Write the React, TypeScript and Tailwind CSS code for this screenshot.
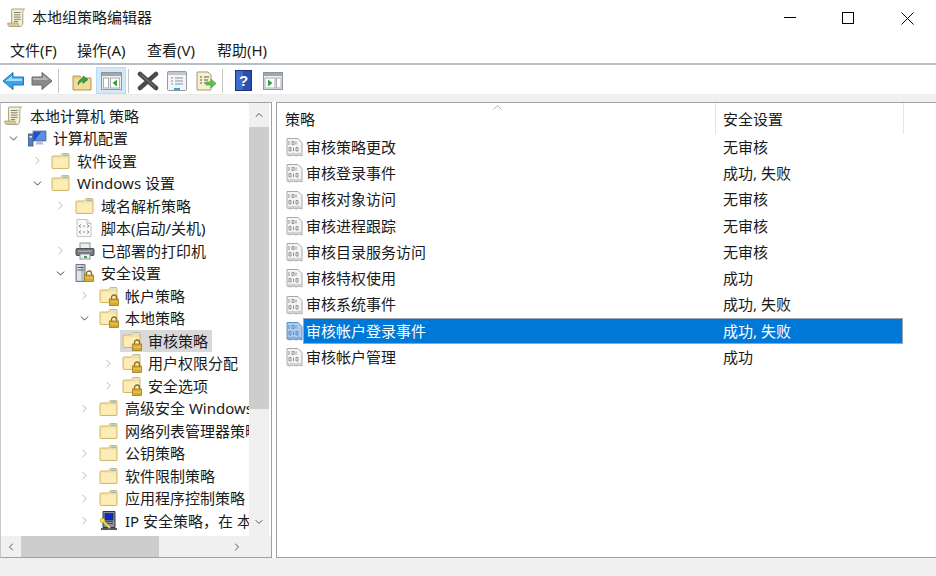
import React from "react";
import { ChevronRight, ChevronDown, ChevronUp, ChevronLeft } from "lucide-react";

const font = { fontFamily: '"Noto Sans", "Noto Sans CJK SC", sans-serif' };

function ScrollIcon() {
    return (
        <svg width="19" height="20" viewBox="0 0 19 20" className="shrink-0">
            <path d="M5 1h12.500c-1.200.8-1.700 1.800-1.700 3.200V15c0 2-1 3.500-2.600 3.500H3c1.200-.5 1.600-1.300 1.600-2.500V3.500C4.600 2.200 4.500 1.500 5 1z" fill="#f3edd2" stroke="#a8a184" />
            <path d="M.7 15h10.300c0 1.800.7 3 1.800 3.500H2.500C1.300 18.500.7 17 .7 15z" fill="#dcc98c" stroke="#a8a184" strokeWidth="0.800" />
            <path d="M7 4.500h6.500M7 6.800h6.500M7 9.100h6.500M7 11.400h6.500M7 13.500h4" stroke="#86836f" strokeWidth="1" />
        </svg>
    );
}

function FolderIcon() {
    return (
        <svg width="19" height="18" viewBox="0 0 19 18" className="shrink-0">
            <path d="M1 4.500V15.500c0 .7.400 1 1 1h15c.7 0 1-.4 1-1V2.500c0-.7-.4-1-1-1h-5.500c-.6 0-.8.300-1.200 1l-.6 1c-.2.300-.4.500-.8.500H2c-.7 0-1 .3-1 .500z" fill="#f8e3a2" stroke="#d2b76f" />
            <path d="M2 6h15v9.500H2z" fill="#fcecb6" />
            <path d="M12 2.500h5v1.800h-5.800z" fill="#7fc0e6" />
        </svg>
    );
}

function LockBadge({ x, y }: { x: number; y: number }) {
    return (
        <g transform={`translate(${x} ${y})`}>
            <path d="M2.500 4.500V3a2.500 2.500 0 0 1 5 0v1.500" fill="none" stroke="#8a6d1e" strokeWidth="1.300" />
            <rect x="0.500" y="4.500" width="9" height="6.500" fill="#d6a92c" stroke="#8f6f17" strokeWidth="0.700" />
            <path d="M1 7.500h8" stroke="#efcf6c" strokeWidth="1" />
        </g>
    );
}

function LockFolderIcon() {
    return (
        <svg width="21" height="20" viewBox="0 0 21 20" className="shrink-0">
            <path d="M1 4.500V15.500c0 .7.400 1 1 1h15c.7 0 1-.4 1-1V2.500c0-.7-.4-1-1-1h-5.500c-.6 0-.8.300-1.200 1l-.6 1c-.2.300-.4.500-.8.500H2c-.7 0-1 .3-1 .500z" fill="#f8e3a2" stroke="#d2b76f" />
            <path d="M2 6h15v9.500H2z" fill="#fcecb6" />
            <path d="M12 2.500h5v1.800h-5.800z" fill="#cfe3ee" />
            <LockBadge x={10} y={8.500} />
        </svg>
    );
}

function ComputerIcon() {
    return (
        <svg width="20" height="20" viewBox="0 0 20 20" className="shrink-0">
            <rect x="6" y="3" width="13" height="10" fill="#1d4fc4" stroke="#8c97a8" />
            <path d="M8 12l6-8h4v8z" fill="#5c8ee6" />
            <path d="M10 13.500h5l1.500 3h-8z" fill="#b4bcc8" />
            <rect x="1.500" y="6" width="4.500" height="12" fill="#4a86c8" stroke="#43556e" strokeWidth="0.800" />
            <rect x="2.500" y="8" width="2.500" height="1.500" fill="#e3edf7" />
        </svg>
    );
}

function ScriptIcon() {
    return (
        <svg width="18" height="20" viewBox="0 0 18 20" className="shrink-0">
            <path d="M2 1.500h10l4 4v13H2z" fill="#f9f9f9" stroke="#c4c4c4" />
            <path d="M12 1.500v4h4" fill="#e8e8e8" stroke="#c4c4c4" />
            <path d="M6 6.500l-2 1.500 2 1.500M12 6.500l2 1.500-2 1.500M6 12.500l-2 1.500 2 1.500M12 12.500l2 1.500-2 1.500M8 8h2M8 14h2" fill="none" stroke="#7b7f86" strokeWidth="0.900" />
        </svg>
    );
}

function PrinterIcon() {
    return (
        <svg width="20" height="20" viewBox="0 0 20 20" className="shrink-0">
            <rect x="5" y="2" width="10" height="6" fill="#eceef0" stroke="#8d9096" />
            <rect x="1" y="7.500" width="18" height="7" rx="1" fill="#70757d" stroke="#4d5157" />
            <rect x="3" y="9.500" width="14" height="1.500" fill="#a9adb3" />
            <rect x="5" y="13" width="10" height="5" fill="#f2f2f2" stroke="#8d9096" />
            <rect x="9" y="15" width="3" height="2" fill="#2fa866" />
        </svg>
    );
}

function SecurityIcon() {
    return (
        <svg width="20" height="20" viewBox="0 0 20 20" className="shrink-0">
            <path d="M1 1.500h9v17H1z" fill="#b9c1cc" stroke="#6d7785" />
            <path d="M2 2.500h4v15H2z" fill="#dfe4ea" />
            <path d="M2.500 4.500h6M2.500 7h6" stroke="#4f5866" />
            <LockBadge x={9} y={7.500} />
        </svg>
    );
}

function IpSecIcon() {
    return (
        <svg width="20" height="21" viewBox="0 0 20 21" className="shrink-0">
            <path d="M4 1.500h12v16H4z" fill="#8d9199" stroke="#33363b" />
            <rect x="6" y="3.500" width="8" height="6.500" fill="#1628c8" stroke="#24272c" strokeWidth="0.700" />
            <path d="M6 11.500h8M6 13.500h8" stroke="#4d5157" />
            <path d="M2 18h16v2H2z" fill="#55585e" />
            <circle cx="3.500" cy="10.500" r="2.300" fill="#f4e34a" stroke="#a39a22" strokeWidth="0.600" />
            <path d="M5 12l6 6" stroke="#eedb3c" strokeWidth="2" />
        </svg>
    );
}

function PolicyIcon({ selected }: { selected?: boolean }) {
    const line = selected ? "#5b8fca" : "#8f9296";
    return (
        <svg width="17" height="20" viewBox="0 0 17 20" className="shrink-0">
            <path d="M1 1.500h11l4 4v13.500l-3-1-3 1-3-1-3 1-3-1z" fill={selected ? "#a9cbee" : "#f4f4f4"} stroke={selected ? "#5b8fca" : "#a8a8a8"} />
            <path d="M1.500 15.500l2.500 1 3-1 3 1 3-1 2.500 1v2l-3-1-3 1-3-1-3 1-2.500-1z" fill={selected ? "#7fa9d8" : "#cfcfcf"} />
            <path d="M3 4v4M6 4.500h2v3H6zM3 10.500h2v3.500H3zM7.500 10.500v3.500M10 10.500h2v3.500h-2zM10 7.500v-3" fill="none" stroke={line} strokeWidth="1" />
        </svg>
    );
}

type TreeRow = {
    label: string;
    depth: number;
    icon: React.ReactNode;
    toggle?: "open" | "closed";
    selected?: boolean;
};

const indents = ["pl-[3px]", "pl-[26px]", "pl-[50px]", "pl-[74px]", "pl-[98px]", "pl-[121px]"];
const arrowIndents = ["", "left-[6px]", "left-[30px]", "left-[53px]", "left-[77px]", "left-[101px]"];

const treeRows: TreeRow[] = [
    { label: "本地计算机 策略", depth: 0, icon: <ScrollIcon /> },
    { label: "计算机配置", depth: 1, icon: <ComputerIcon />, toggle: "open" },
    { label: "软件设置", depth: 2, icon: <FolderIcon />, toggle: "closed" },
    { label: "Windows 设置", depth: 2, icon: <FolderIcon />, toggle: "open" },
    { label: "域名解析策略", depth: 3, icon: <FolderIcon />, toggle: "closed" },
    { label: "脚本(启动/关机)", depth: 3, icon: <ScriptIcon /> },
    { label: "已部署的打印机", depth: 3, icon: <PrinterIcon />, toggle: "closed" },
    { label: "安全设置", depth: 3, icon: <SecurityIcon />, toggle: "open" },
    { label: "帐户策略", depth: 4, icon: <LockFolderIcon />, toggle: "closed" },
    { label: "本地策略", depth: 4, icon: <LockFolderIcon />, toggle: "open" },
    { label: "审核策略", depth: 5, icon: <LockFolderIcon />, selected: true },
    { label: "用户权限分配", depth: 5, icon: <LockFolderIcon />, toggle: "closed" },
    { label: "安全选项", depth: 5, icon: <LockFolderIcon />, toggle: "closed" },
    { label: "高级安全 Windows Defender 防火墙", depth: 4, icon: <FolderIcon />, toggle: "closed" },
    { label: "网络列表管理器策略", depth: 4, icon: <FolderIcon /> },
    { label: "公钥策略", depth: 4, icon: <FolderIcon />, toggle: "closed" },
    { label: "软件限制策略", depth: 4, icon: <FolderIcon />, toggle: "closed" },
    { label: "应用程序控制策略", depth: 4, icon: <FolderIcon />, toggle: "closed" },
    { label: "IP 安全策略，在 本地计算机", depth: 4, icon: <IpSecIcon />, toggle: "closed" },
];

const policies = [
    { name: "审核策略更改", value: "无审核" },
    { name: "审核登录事件", value: "成功, 失败" },
    { name: "审核对象访问", value: "无审核" },
    { name: "审核进程跟踪", value: "无审核" },
    { name: "审核目录服务访问", value: "无审核" },
    { name: "审核特权使用", value: "成功" },
    { name: "审核系统事件", value: "成功, 失败" },
    { name: "审核帐户登录事件", value: "成功, 失败", selected: true },
    { name: "审核帐户管理", value: "成功" },
];

function Separator() {
    return <div className="w-px h-[24px] bg-[#c4c4c4] shrink-0" />;
}

function Toolbar() {
    return (
        <div className="flex items-center h-[30px] pt-[2px] pl-[2px] shrink-0 border-b border-[#ececec]">
            <svg width="23" height="20" viewBox="0 0 23 20" className="shrink-0">
                <path d="M1 10L11 1.500V6h10.500v8H11v4.500z" fill="#3ba3ea" stroke="#1b75c0" />
                <path d="M4 9.500L10 5v2.500h10V10H4z" fill="#a6dcfb" />
            </svg>
            <svg width="22" height="20" viewBox="0 0 22 20" className="ml-[6px] shrink-0">
                <path d="M21 10L11 1.500V6H1v8h10v4.500z" fill="#8a8a8a" stroke="#6b6b6b" />
                <path d="M2 7h10V4l6 5H2z" fill="#b5b5b5" />
            </svg>
            <div className="ml-[5px]"><Separator /></div>
            <svg width="20" height="20" viewBox="0 0 20 20" className="ml-[13px] shrink-0">
                <path d="M1 5h7l1.500 2H19v12H1z" fill="#ecd186" stroke="#b59a4e" />
                <path d="M2 8h16v10H2z" fill="#f3dc9a" />
                <path d="M6 14c0-4 2-6 5-6.500V5l5 3.500-5 4V10c-2 .3-3.500 2-5 4z" fill="#36a33e" stroke="#1f7a2a" strokeWidth="0.600" />
            </svg>
            <div className="ml-[4px] w-[30px] h-[27px] bg-[#d3e9fa] border border-[#b5dcf8] flex items-center justify-center shrink-0">
                <svg width="21" height="18" viewBox="0 0 21 18">
                    <rect x="0.500" y="0.500" width="20" height="17" fill="#eef0f2" stroke="#8f959e" />
                    <rect x="1" y="1" width="19" height="3" fill="#a0a6ae" />
                    <rect x="2.500" y="6" width="5" height="10" fill="#fff" stroke="#a8adb4" />
                    <rect x="9.500" y="6" width="9" height="10" fill="#fff" stroke="#a8adb4" />
                    <path d="M16 7.500v7L11.500 11z" fill="#2fa63c" />
                </svg>
            </div>
            <div className="ml-[2px]"><Separator /></div>
            <svg width="22" height="20" viewBox="0 0 22 20" className="ml-[8px] shrink-0">
                <path d="M3 3l16 14M19 3L3 17" stroke="#4a4a4a" strokeWidth="4.500" strokeLinecap="round" />
                <path d="M4 3.500l14 12.500" stroke="#6f6f6f" strokeWidth="1.200" />
            </svg>
            <svg width="20" height="20" viewBox="0 0 20 20" className="ml-[8px] shrink-0">
                <rect x="0.500" y="0.500" width="19" height="19" rx="1" fill="#f3f4f5" stroke="#969aa0" />
                <rect x="1" y="1" width="18" height="3" fill="#c2c6cb" />
                <path d="M4 7h2M8 7h8M4 10h2M8 10h8M4 13h2M8 13h8" stroke="#7f97b5" />
                <rect x="7" y="17" width="6" height="2" fill="#35a3e0" />
            </svg>
            <svg width="21" height="20" viewBox="0 0 21 20" className="ml-[9px] shrink-0">
                <path d="M1 1h11l3 3v15H1z" fill="#f6efd0" stroke="#a39a78" />
                <path d="M4 6h2M8 6h5M4 9h2M8 9h4M4 12h2M8 12h3" stroke="#5d5c50" />
                <path d="M10 11h5V8l5 4.500-5 4.500v-3h-5z" fill="#5fc24b" stroke="#3c9a32" strokeWidth="0.600" />
            </svg>
            <div className="ml-[5px]"><Separator /></div>
            <svg width="17" height="21" viewBox="0 0 17 21" className="ml-[12px] shrink-0">
                <rect x="0.500" y="0.500" width="16" height="20" fill="#2c4fae" stroke="#1b2f7a" />
                <rect x="1" y="1" width="7" height="19" fill="#3f6ccc" />
                <text x="8.500" y="16" textAnchor="middle" fontSize="15" fontWeight="700" fill="#ffffff" fontFamily="Liberation Sans, sans-serif">?</text>
            </svg>
            <svg width="20" height="18" viewBox="0 0 20 18" className="ml-[11px] shrink-0">
                <rect x="0.500" y="0.500" width="19" height="17" fill="#eef0f2" stroke="#8f959e" />
                <rect x="1" y="1" width="18" height="3" fill="#a0a6ae" />
                <rect x="2" y="6" width="10" height="10" fill="#fff" stroke="#a8adb4" />
                <rect x="13.500" y="6" width="4.500" height="10" fill="#fff" stroke="#a8adb4" />
                <path d="M5 7.500v7L9.500 11z" fill="#2fa63c" />
            </svg>
        </div>
    );
}

function Tree() {
    return (
        <div className="w-[272px] shrink-0 border border-[#a0a0a0] border-l-[#c8c8c8] flex flex-col overflow-hidden">
            <div className="flex flex-1 min-h-0">
                <div className="w-[248px] shrink-0 overflow-hidden pt-[1.5px]">
                    {treeRows.map((row) => (
                        <div key={row.label} className={`relative flex items-center h-[22.5px] whitespace-nowrap ${indents[row.depth]}`}>
                            {row.toggle === "closed" && (
                                <ChevronRight size={13} strokeWidth={1.5} className={`absolute text-[#a6a6a6] ${arrowIndents[row.depth]}`} />
                            )}
                            {row.toggle === "open" && (
                                <ChevronDown size={13} strokeWidth={1.8} className={`absolute text-[#404040] ${arrowIndents[row.depth]}`} />
                            )}
                            <div className={`flex items-center h-[22.5px] ${row.selected ? "bg-[#d9d9d9] -ml-[2px] pl-[2px] pr-[4px]" : ""}`}>
                                <div className="w-[26px] shrink-0 flex items-center">{row.icon}</div>
                                <span>{row.label}</span>
                            </div>
                        </div>
                    ))}
                </div>
                <div className="w-[20px] shrink-0 flex flex-col bg-[#f0f0f0] text-[#555]">
                    <div className="h-[24px] flex items-center justify-center"><ChevronUp size={12} strokeWidth={2} /></div>
                    <div className="h-[282px] bg-[#cdcdcd]" />
                    <div className="flex-1" />
                    <div className="h-[28px] flex items-center justify-center"><ChevronDown size={12} strokeWidth={2} /></div>
                </div>
            </div>
            <div className="flex h-[21px] bg-[#f0f0f0] text-[#555] shrink-0">
                <div className="w-[20px] flex items-center justify-center"><ChevronLeft size={12} strokeWidth={2} /></div>
                <div className="w-[138px] bg-[#cdcdcd]" />
                <div className="flex-1 flex items-center justify-end pr-[28px]"><ChevronRight size={12} strokeWidth={2} /></div>
            </div>
        </div>
    );
}

function PolicyList() {
    return (
        <div className="relative flex-1 min-w-0 border border-[#a0a0a0] border-r-0 bg-white">
            <svg width="9" height="5" viewBox="0 0 9 5" className="absolute left-[216px] top-[2px]">
                <path d="M.5 4.500l4-4 4 4" fill="none" stroke="#b5b5b5" />
            </svg>
            <div className="flex h-[31px] items-center">
                <div className="w-[439px] h-full pl-[8px] pt-[2px] flex items-center border-r border-[#e5e5e5]">策略</div>
                <div className="w-[188px] h-full pl-[7px] pt-[2px] flex items-center border-r border-[#e5e5e5]">安全设置</div>
            </div>
            {policies.map((p) => (
                <div key={p.name} className="flex items-center h-[26.25px] pl-[9px]">
                    <PolicyIcon selected={p.selected} />
                    <div className={`flex items-center h-[26.25px] w-[600px] ${p.selected ? "bg-[#0078d7] text-white outline outline-1 -outline-offset-1 outline-[#9aa5b1]" : ""}`}>
                        <span className="w-[420px] pl-[3px]">{p.name}</span>
                        <span>{p.value}</span>
                    </div>
                </div>
            ))}
        </div>
    );
}

export default function App() {
    return (
        <div className="w-[936px] h-[576px] bg-white flex flex-col overflow-hidden text-[15px] text-[#1a1a1a]" style={font}>
            <div className="relative flex items-center h-[36px] pb-[1px] pl-[7px] gap-[6px] shrink-0">
                <ScrollIcon />
                <span>本地组策略编辑器</span>
                <svg width="130" height="14" viewBox="0 0 130 14" className="absolute left-[784px] top-[11px]">
                    <path d="M0 6.500h12" stroke="#000" />
                    <rect x="58.500" y="1.500" width="11" height="11" fill="none" stroke="#000" />
                    <path d="M117.500 1.500l12 12M129.500 1.500l-12 12" stroke="#000" />
                </svg>
            </div>
            <div className="flex items-center h-[29px] pt-[2px] pl-[10px] shrink-0 border-b-2 border-[#b9bdc4]">
                <span className="w-[67px]">文件(F)</span>
                <span className="w-[70px]">操作(A)</span>
                <span className="w-[70px]">查看(V)</span>
                <span>帮助(H)</span>
            </div>
            <Toolbar />
            <div className="h-[7px] bg-[#f0f0f0] shrink-0" />
            <div className="flex flex-1 min-h-0 gap-[4px]">
                <Tree />
                <PolicyList />
            </div>
            <div className="h-[18px] bg-[#f0f0f0] shrink-0" />
        </div>
    );
}
